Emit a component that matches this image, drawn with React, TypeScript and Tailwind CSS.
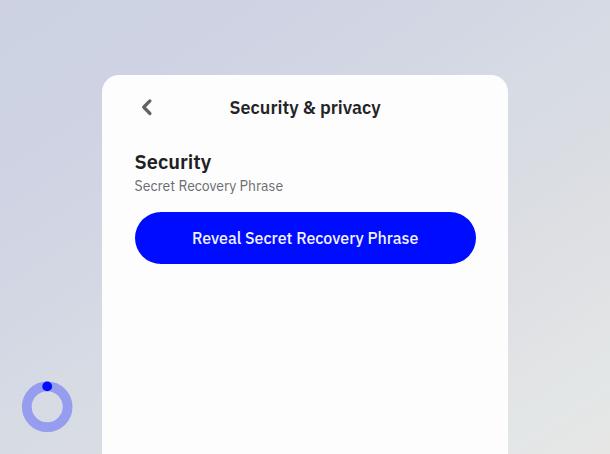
import React from "react";

function Header() {
  return (
    <header className="grid h-8 grid-cols-[24px_1fr_24px] items-center">
      <button type="button" aria-label="Back" className="flex h-6 w-6 items-center justify-center">
        <svg width="24" height="24" viewBox="0 0 24 24" fill="none" stroke="#626265" strokeWidth="3.3" strokeLinecap="round" strokeLinejoin="round">
          <path d="M14.9 4.9 L8.7 11.2 L14.9 17.5" />
        </svg>
      </button>
      <h1 className="pt-px text-center text-[18px] leading-8 font-semibold whitespace-nowrap text-[#242427]">
        Security &amp; privacy
      </h1>
    </header>
  );
}

function SecuritySection() {
  return (
    <section className="mt-[23px]">
      <h2 className="text-[20px] leading-8 font-semibold text-[#202023]">Security</h2>
      <p className="text-[14px] leading-[17px] text-[#6c6c70]">Secret Recovery Phrase</p>
      <button
        type="button"
        className="mt-[17px] flex h-[52px] w-full items-center justify-center rounded-full bg-[#000cff] text-[16px] font-medium text-[#f0f2ff]"
      >
        Reveal Secret Recovery Phrase
      </button>
    </section>
  );
}

function ProgressRing() {
  return (
    <svg className="absolute top-[381px] left-[21px]" width="53" height="53" viewBox="0 0 53 53">
      <circle cx="26.2" cy="25.8" r="20.4" fill="none" stroke="#969dee" strokeWidth="9.8" />
      <circle cx="26.2" cy="5.4" r="4.9" fill="#000cff" />
    </svg>
  );
}

export default function App() {
  return (
    <div className="relative flex h-[454px] w-[610px] justify-center overflow-hidden bg-[linear-gradient(147deg,#cdd1e2_0%,#ccd3e3_9%,#cfd2e3_18%,#d2d5e3_32%,#d6dbe4_50%,#dadde2_63%,#e0e1e4_78%,#e3e6e7_90%,#e6e7e5_100%)] pt-[75px] font-['IBM_Plex_Sans','Noto_Sans',sans-serif]">
      <main className="h-[379px] w-[405.4px] rounded-t-[17px] bg-[#fdfdfe] pt-4 pr-8 pl-[32.3px]">
        <Header />
        <SecuritySection />
      </main>
      <ProgressRing />
    </div>
  );
}
